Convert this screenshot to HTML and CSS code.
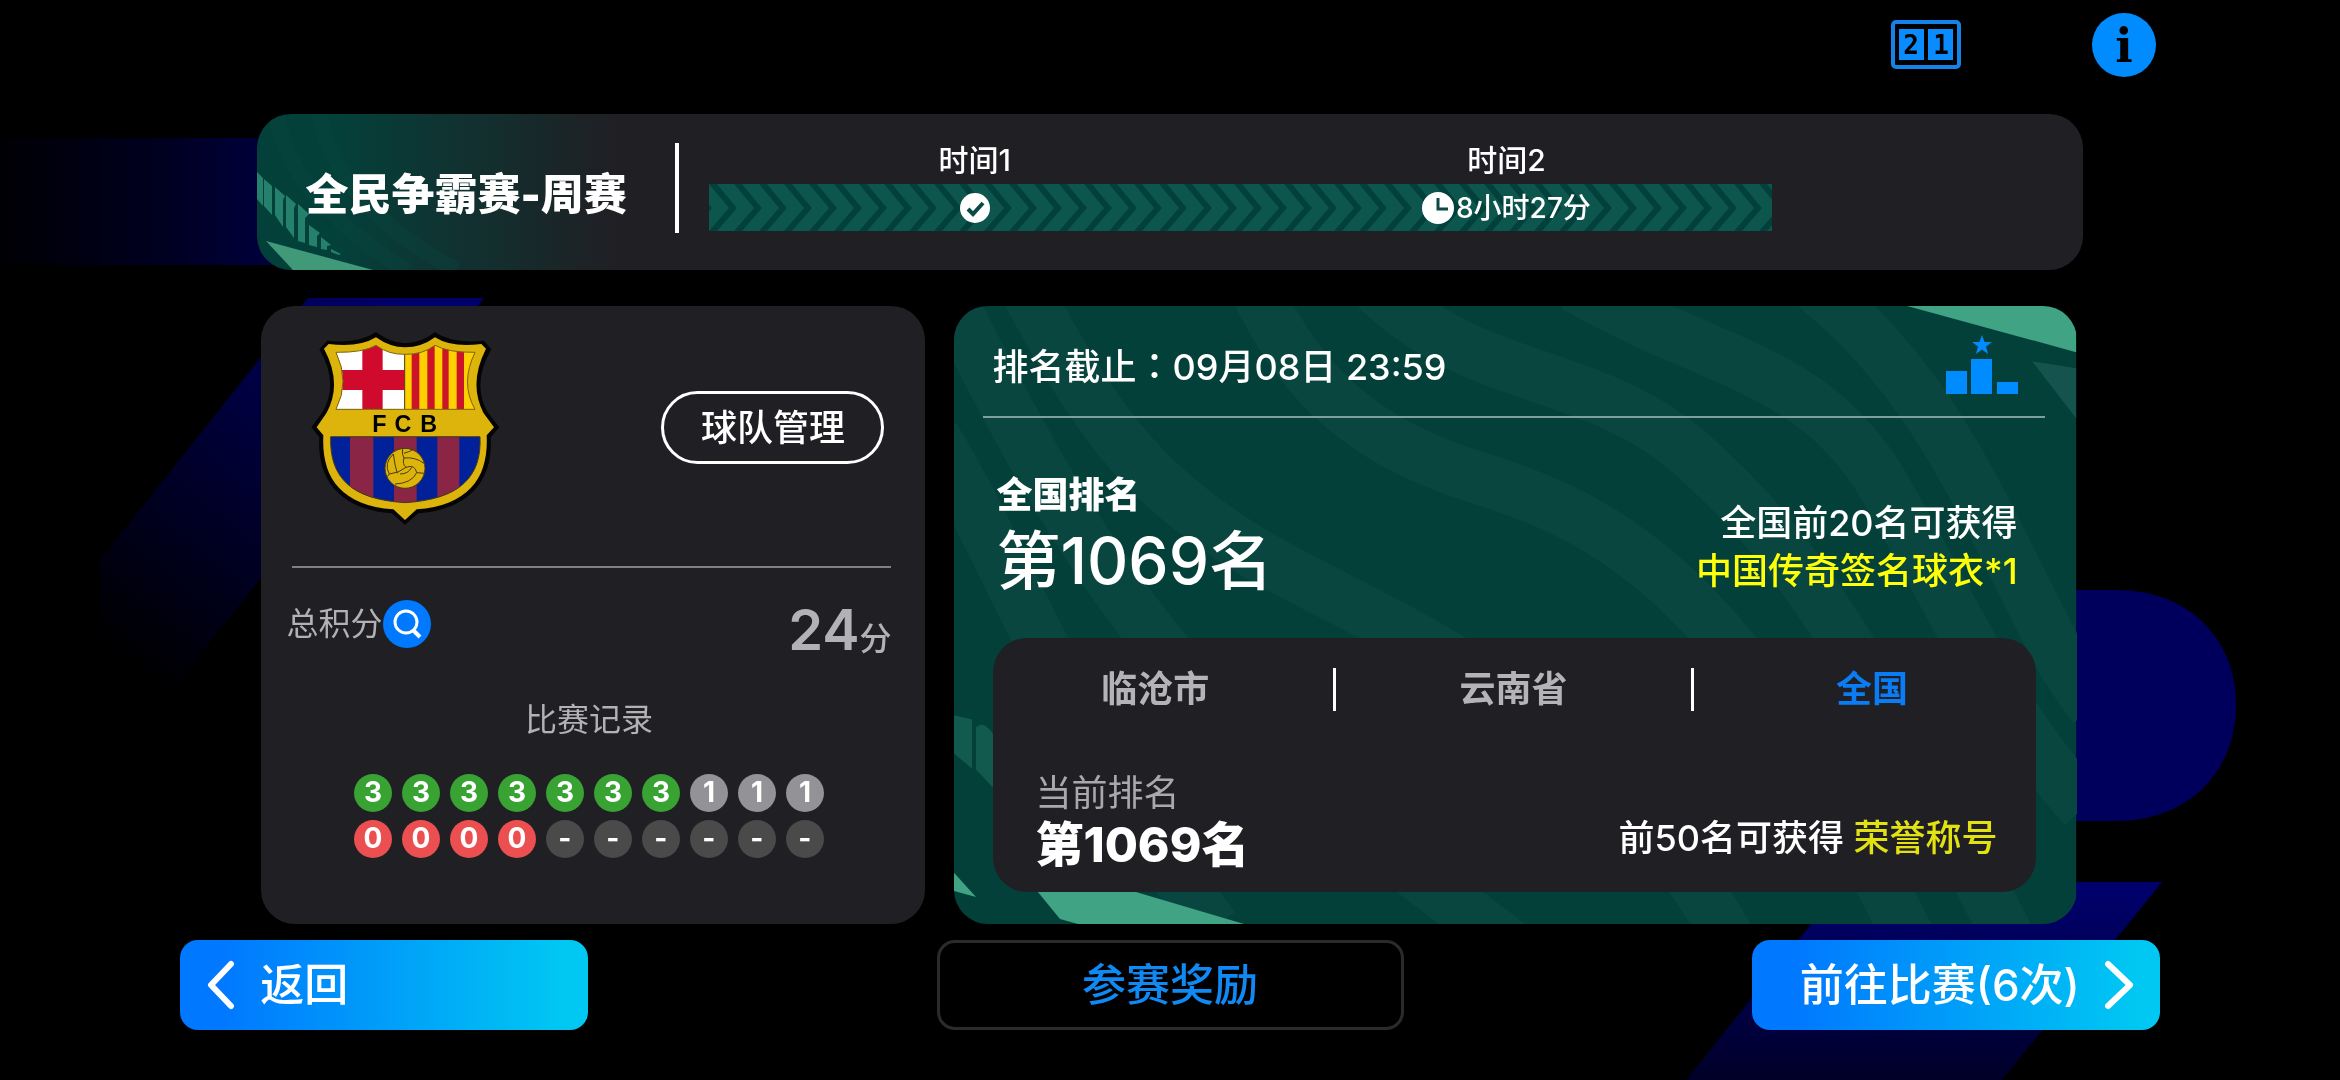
FILE: index.html
```html
<!DOCTYPE html>
<html lang="zh-CN">
<head>
<meta charset="utf-8">
<meta name="viewport" content="width=device-width, initial-scale=1">
<title>全民争霸赛-周赛</title>
<link rel="stylesheet" href="styles.css">
</head>
<body>
<svg class="backdrop" viewBox="0 0 2340 1080" preserveAspectRatio="xMidYMid slice" aria-hidden="true">
  <defs>
    <linearGradient id="bandFade"><stop offset="0" stop-color="#000004"/><stop offset=".5" stop-color="#00001e"/><stop offset="1" stop-color="#000044"/></linearGradient>
    <linearGradient id="slashFade" gradientUnits="userSpaceOnUse" x1="400" y1="298" x2="110" y2="650"><stop offset="0" stop-color="#00006a"/><stop offset=".45" stop-color="#000038"/><stop offset="1" stop-color="#000000"/></linearGradient>
    <linearGradient id="lowFade" x1="0" y1="0" x2="0" y2="1"><stop offset="0" stop-color="#00006e"/><stop offset=".45" stop-color="#000052"/><stop offset="1" stop-color="#000028"/></linearGradient>
  </defs>
  <rect x="0" y="138" width="300" height="127" fill="url(#bandFade)"/>
  <path d="M308 298H484L160 705H100V560Z" fill="url(#slashFade)"/>
  <path d="M1900 590H2116C2190 590 2236 640 2236 705S2190 821 2116 821H1900Z" fill="#00005c"/>
  <path d="M1845 882H2162L2002 1080H1686Z" fill="url(#lowFade)"/>
</svg>

<div class="page">
  <header class="toolbar">
    <button class="icon-button" type="button" aria-label="比分牌">
      <svg width="72" height="52" viewBox="0 0 72 52">
        <rect x="3" y="3" width="66" height="45" rx="3" fill="none" stroke="#1482e6" stroke-width="4"/>
        <rect x="9" y="10" width="25" height="31" fill="#0a8cff"/><rect x="38" y="10" width="25" height="31" fill="#0a8cff"/>
        <text class="score-digit" x="21" y="35">2</text><text class="score-digit" x="51" y="35">1</text>
      </svg>
    </button>
    <button class="icon-button" type="button" aria-label="说明">
      <svg width="64" height="64" viewBox="0 0 64 64">
        <circle cx="32" cy="32" r="32" fill="#008cff"/>
        <text class="info-letter" x="32" y="49">i</text>
      </svg>
    </button>
  </header>

  <section class="event">
    <svg class="event-art" width="400" height="156" viewBox="0 0 400 156" aria-hidden="true">
      <g fill="none" stroke="#0d4a44" stroke-width="16" opacity=".3"><path d="M20 0C26 50 70 110 150 156"/><path d="M62 0C72 50 110 110 200 156"/></g>
      <g fill="#25806c">
        <path d="M0 58L6 64V92L0 85Z"/><path d="M7 65L15 72V101L7 92Z"/><path d="M18 73L28 82L26 86V113L18 101Z"/>
        <path d="M29 81L39 90L37 94V124L29 113Z"/><path d="M41 90L52 100L48 104V129L41 127Z"/><path d="M52 111L63 119L60 122V133L52 131Z"/>
        <path d="M64 123L74 131L70 132V136L64 135Z"/><path d="M74 135L84 140L82 141L74 138Z"/>
      </g>
      <path d="M9 127L116 156H36Z" fill="#409979"/>
    </svg>
    <h1 class="event-title">全民争霸赛-周赛</h1>
    <div class="schedule">
      <span class="slot-name">时间1</span>
      <span class="slot-name">时间2</span>
      <div class="track">
        <svg class="track-art" width="100%" height="100%" aria-hidden="true">
          <defs><pattern id="arrows" width="25" height="47" patternUnits="userSpaceOnUse">
            <rect width="25" height="47" fill="#0d564d"/>
            <path d="M-25 0H-17L3 24L-17 47H-25L-5 24ZM0 0H8L28 24L8 47H0L20 24Z" fill="#02413b"/>
          </pattern></defs>
          <rect width="100%" height="100%" fill="url(#arrows)"/>
        </svg>
        <span class="slot-state">
          <svg width="30" height="30" viewBox="0 0 30 30" role="img" aria-label="已完成"><circle cx="15" cy="15" r="15" fill="#fff"/><path d="M8 16L13 21L23 10" fill="none" stroke="#0b4a43" stroke-width="4"/></svg>
        </span>
        <span class="slot-state">
          <svg width="32" height="32" viewBox="0 0 32 32" aria-hidden="true"><circle cx="16" cy="16" r="16" fill="#fff"/><path d="M16 6V17H26" fill="none" stroke="#0b4a43" stroke-width="3"/></svg>8小时27分
        </span>
      </div>
    </div>
  </section>

  <main class="panels">
    <section class="team">
      <div class="team-head">
        <svg class="crest" viewBox="0 0 630 630" role="img" aria-label="FCB">
          <defs>
            <clipPath id="upper"><path d="M108 97Q190 98 228 76Q265 104 315 103Q368 104 405 76Q445 98 525 97Q480 190 525 268H108Q150 185 108 97Z"/></clipPath>
            <clipPath id="lower"><path d="M92 350H540C546 470 480 538 315 548C150 538 88 470 92 350Z"/></clipPath>
          </defs>
          <path d="M58 88L82 62Q175 72 228 36Q270 68 315 70Q365 68 405 36Q455 72 552 62L574 88Q515 190 562 275L598 322L572 352C580 480 510 568 355 580L315 614L275 580C120 568 50 480 58 352L34 322L68 275Q118 190 58 88Z" fill="#050505"/>
          <path d="M72 86L86 72Q175 84 228 52Q270 82 315 82Q365 82 405 52Q455 84 544 72L558 86Q505 190 550 278L582 322L560 346C566 470 510 555 350 568L315 600L280 568C120 555 64 470 70 346L50 322L80 278Q128 190 72 86Z" fill="#dcb40c"/>
          <g clip-path="url(#upper)">
            <rect x="90" y="60" width="224" height="220" fill="#fff"/>
            <path d="M187 60H248V150H314V210H248V280H187V210H90V150H187Z" fill="#cf0a2c"/>
            <rect x="314" y="60" width="220" height="220" fill="#ffd000"/>
            <path d="M335 60H358V280H335ZM382 60H404V280H382ZM427 60H446V280H427ZM470 60H492V280H470Z" fill="#cc1428"/>
            <path d="M314 60V280" stroke="#4a3c10" stroke-width="3"/>
          </g>
          <path d="M108 97Q190 98 228 76Q265 104 315 103Q368 104 405 76Q445 98 525 97Q480 190 525 268H108Q150 185 108 97Z" fill="none" stroke="#7a6410" stroke-width="3"/>
          <text class="crest-letters" y="335"><tspan x="238">F</tspan><tspan x="309">C</tspan><tspan x="386">B</tspan></text>
          <g clip-path="url(#lower)">
            <rect x="80" y="350" width="470" height="210" fill="#00219a"/>
            <path d="M150 350H220V560H150ZM282 350H350V560H282ZM412 350H478V560H412Z" fill="#8a2546"/>
          </g>
          <path d="M92 350H540C546 470 480 538 315 548C150 538 88 470 92 350Z" fill="none" stroke="#4a3c10" stroke-width="3"/>
          <circle cx="315" cy="445" r="60" fill="#dcb40c" stroke="#4a3c10" stroke-width="3"/>
          <g fill="none" stroke="#4a3c10" stroke-width="3">
            <path d="M308 386Q305 405 312 414Q345 410 372 430M312 414Q306 432 318 442Q345 432 350 458L375 460M318 442Q295 460 268 462L262 470M268 462Q250 430 280 402M280 402Q285 440 292 460M350 458Q335 490 285 492M335 442Q325 462 300 462M340 388Q330 395 312 400"/>
          </g>
        </svg>
        <button class="manage" type="button">球队管理</button>
      </div>
      <div class="points">
        <span class="points-name">总积分
          <button class="search" type="button" aria-label="查看积分">
            <svg width="48" height="48" viewBox="0 0 48 48"><circle cx="24" cy="24" r="24" fill="#0079ff"/><circle cx="23" cy="22" r="11" fill="none" stroke="#fff" stroke-width="3"/><path d="M30 30L37 37" stroke="#fff" stroke-width="4"/></svg>
          </button>
        </span>
        <span class="points-value"><strong>24</strong>分</span>
      </div>
      <h2 class="record-title">比赛记录</h2>
      <ol class="record">
        <li class="win">3</li><li class="win">3</li><li class="win">3</li><li class="win">3</li><li class="win">3</li><li class="win">3</li><li class="win">3</li><li class="draw">1</li><li class="draw">1</li><li class="draw">1</li>
        <li class="loss">0</li><li class="loss">0</li><li class="loss">0</li><li class="loss">0</li><li>-</li><li>-</li><li>-</li><li>-</li><li>-</li><li>-</li>
      </ol>
    </section>

    <section class="ranking">
      <svg class="ranking-art" viewBox="0 0 1122 616" preserveAspectRatio="none" aria-hidden="true">
        <rect width="1122" height="616" fill="#04403a"/>
        <g fill="none" stroke="#09463f" stroke-width="52">
          <path d="M-20 130C60 260 110 420 260 620"/>
          <path d="M-10 -20C60 120 120 230 200 330S400 520 560 640"/>
          <path d="M70 -20C140 110 180 170 290 240S640 380 780 640"/>
          <path d="M300 -20C340 60 390 130 520 170S780 270 960 640"/>
          <path d="M420 -20C520 80 640 60 740 150S900 330 1060 640"/>
          <path d="M620 -20C760 60 860 60 930 180S1040 400 1130 500"/>
          <path d="M860 -20C960 60 1010 160 1060 260S1110 360 1140 400"/>
        </g>
        <path d="M953 0H1122V46Z" fill="#3fa384"/>
        <path d="M1078 55L1122 62V112Z" fill="#15544e"/>
        <path d="M0 408L18 412V461L0 446ZM22 420Q30 412 40 428V481L22 462Z" fill="#12594e"/>
        <path d="M0 565L22 589L0 583ZM60 555L106 611L124 616H290L100 560Z" fill="#3fa384"/>
      </svg>
      <div class="deadline">
        <p>排名截止<span class="wide-colon" lang="zh-TW">：</span>09月08日 23:59</p>
        <button class="icon-button" type="button" aria-label="排行榜">
          <svg width="72" height="60" viewBox="0 0 72 60" fill="#008cff"><path d="M0 36H21V59H0ZM25 24H46V59H25ZM51 47H72V59H51ZM36 0L38.500 7H46L40 11.500L42 19L36 14.500L30 19L32 11.500L26 7H33.500Z"/></svg>
        </button>
      </div>
      <div class="national">
        <div>
          <h2 class="national-name">全国排名</h2>
          <p class="national-rank">第1069名</p>
        </div>
        <p class="prize">全国前20名可获得<br><span class="prize-gold">中国传奇签名球衣*1</span></p>
      </div>
      <div class="region">
        <div class="tabs">
          <button class="tab" type="button">临沧市</button>
          <button class="tab" type="button">云南省</button>
          <button class="tab is-active" type="button">全国</button>
        </div>
        <div class="region-body">
          <div>
            <h3 class="current-name">当前排名</h3>
            <p class="current-rank">第1069名</p>
          </div>
          <p class="honour">前50名可获得 <span class="honour-gold">荣誉称号</span></p>
        </div>
      </div>
    </section>
  </main>

  <footer class="actions">
    <button class="action back" type="button">
      <svg width="30" height="50" viewBox="0 0 30 50" aria-hidden="true"><path d="M25 4L5 25L25 46" fill="none" stroke="#fff" stroke-width="6" stroke-linecap="round" stroke-linejoin="round"/></svg>返回
    </button>
    <button class="action rewards" type="button">参赛奖励</button>
    <button class="action play" type="button">前往比赛(6次)
      <svg width="30" height="50" viewBox="0 0 30 50" aria-hidden="true"><path d="M4 4L26 25L4 46" fill="none" stroke="#fff" stroke-width="6" stroke-linecap="round" stroke-linejoin="round"/></svg>
    </button>
  </footer>
</div>
</body>
</html>
```
FILE: styles.css
```css
* { box-sizing: border-box; }

body {
  margin: 0;
  background: #000;
  color: #fff;
  font-family: "Inter", "Noto Sans CJK SC", sans-serif;
  font-size: 36px;
  font-weight: 500;
  line-height: 48px;
}

h1, h2, h3, p, ol { margin: 0; padding: 0; }

button {
  margin: 0;
  padding: 0;
  border: 0;
  background: none;
  color: inherit;
  font: inherit;
  cursor: pointer;
}

svg { display: block; flex: none; }

.backdrop {
  position: fixed;
  inset: 0;
  width: 100%;
  height: 100%;
  z-index: -1;
}

.page {
  display: flex;
  flex-direction: column;
  min-height: 100vh;
}

.toolbar {
  display: flex;
  justify-content: flex-end;
  align-items: center;
  gap: 130px;
  height: 114px;
  padding: 0 184px 24px;
}

.score-digit {
  font: bold 26px "DejaVu Sans Mono", monospace;
  text-anchor: middle;
}

.info-letter {
  font: bold 46px "DejaVu Serif", serif;
  text-anchor: middle;
}

/* Event header */
.event {
  position: relative;
  display: flex;
  align-items: center;
  height: 156px;
  margin: 0 11%;
  border-radius: 34px;
  overflow: hidden;
  background: linear-gradient(90deg, #04403a 0, #04403a 80px, #201f24 360px);
}

.event-art { position: absolute; left: 0; bottom: 0; }

.event-title {
  position: relative;
  margin-bottom: 8px;
  padding: 26px 48px 14px;
  border-right: 4px solid #fff;
  font-size: 43px;
  line-height: 50px;
  font-weight: 900;
  white-space: nowrap;
}

.schedule {
  flex: 1;
  display: grid;
  grid-template-columns: 1fr 1fr;
  margin: 0 17% 18px 30px;
  text-align: center;
}

.slot-name { font-size: 30px; line-height: 48px; }

.track {
  position: relative;
  grid-column: 1 / -1;
  display: grid;
  grid-template-columns: 1fr 1fr;
  height: 47px;
}

.track-art { position: absolute; inset: 0; }

.slot-state {
  position: relative;
  display: flex;
  justify-content: center;
  align-items: center;
  gap: 2px;
  font-size: 28px;
}

/* Panels */
.panels {
  display: grid;
  grid-template-columns: 664fr 1122fr;
  gap: 29px;
  margin: 36px 11% 0;
  padding: 0 6px 0 4px;
}

.team {
  padding: 0 34px 0 25px;
  border-radius: 34px;
  background: #201f24;
}

.team-head {
  display: flex;
  justify-content: space-between;
  align-items: flex-start;
  height: 262px;
  margin-left: 6px;
  padding: 14px 7px 0 8px;
  border-bottom: 2px solid #808084;
}

.crest { width: 210px; height: 210px; }

.crest-letters {
  font: bold 70px "Liberation Sans", sans-serif;
  text-anchor: middle;
}

.manage {
  width: 223px;
  height: 73px;
  margin-top: 71px;
  border: 3px solid #fff;
  border-radius: 37px;
}

.points {
  display: flex;
  justify-content: space-between;
  height: 112px;
  padding-top: 32px;
  color: #b2b1b6;
  font-size: 32px;
}

.points-name { display: flex; align-items: center; height: 48px; font-weight: 400; }

.points-value { line-height: 60px; }

.points-value strong { font-size: 56px; font-weight: 600; }

.search { margin-left: 1px; }

.record-title {
  margin-top: 16px;
  color: #b2b1b6;
  font-size: 32px;
  font-weight: 400;
  text-align: center;
}

.record {
  display: grid;
  grid-template-columns: repeat(10, 38px);
  justify-content: center;
  gap: 8px 10px;
  margin: 30px 0 66px;
  list-style: none;
}

.record li {
  height: 38px;
  border-radius: 19px;
  background: #4a4a4b;
  font-size: 28px;
  line-height: 36px;
  font-weight: 700;
  text-align: center;
}

.record .win { background: #38a332; }
.record .draw { background: #939297; }
.record .loss { background: #ec4f50; }

.ranking {
  position: relative;
  display: flex;
  flex-direction: column;
  padding: 0 32px 0 29px;
  border-radius: 34px;
  overflow: hidden;
}

.ranking-art {
  position: absolute;
  inset: 0;
  width: 100%;
  height: 100%;
  z-index: -1;
}

.deadline {
  display: flex;
  justify-content: space-between;
  align-items: center;
  height: 112px;
  padding: 8px 27px 0 9px;
  border-bottom: 2px solid #7f9f9c;
}

.wide-colon { font-family: "Noto Sans CJK TC", sans-serif; }

.national {
  display: flex;
  justify-content: space-between;
  height: 220px;
  padding: 53px 27px 0 13px;
}

.national-name { font-size: 36px; font-weight: 800; }

.national-rank { font-size: 64px; line-height: 84px; }

.prize { padding-top: 28px; text-align: right; }

.prize-gold { color: #ffff0a; }

.region {
  margin: 0 9px 30px 10px;
  height: 254px;
  border-radius: 34px;
  background: #201f24;
}

.tabs { display: flex; margin: 0 -14px 0 -16px; padding-top: 30px; }

.tab {
  flex: 1;
  height: 43px;
  color: #b4b3b8;
  font-weight: 700;
  line-height: 43px;
}

.tab + .tab { border-left: 3px solid #fff; }

.tab.is-active { color: #0a7cf4; }

.region-body {
  display: flex;
  justify-content: space-between;
  padding: 58px 38px 0 42px;
}

.current-name { color: #a9a8ad; font-size: 36px; font-weight: 400; }

.current-rank { font-size: 48px; line-height: 56px; font-weight: 800; }

.honour { padding-top: 45px; }

.honour-gold { color: #e2e212; }

/* Bottom actions */
.actions {
  display: flex;
  justify-content: space-between;
  margin-top: 16px;
  padding: 0 7.7%;
}

.action {
  display: flex;
  align-items: center;
  height: 90px;
  border-radius: 18px;
  font-size: 44px;
  white-space: nowrap;
}

.back, .play {
  width: 408px;
  background: linear-gradient(90deg, #0078ff 10%, #00c8f2 95%);
}

.back { gap: 24px; padding-left: 26px; }

.play { justify-content: flex-end; gap: 24px; padding-right: 26px; }

.rewards {
  justify-content: center;
  width: 467px;
  border: 3px solid #2b2b2d;
  color: #0f8af5;
}
```
